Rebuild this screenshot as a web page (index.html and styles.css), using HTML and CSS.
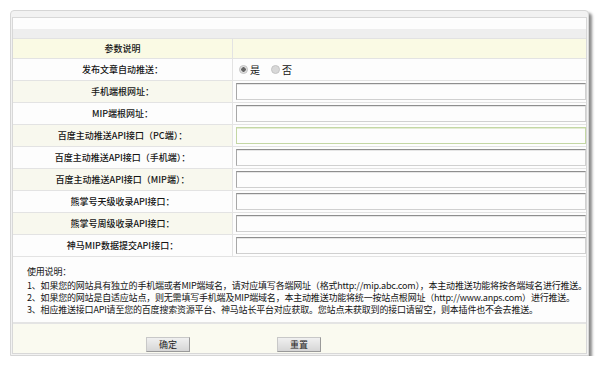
FILE: index.html
```html
<!DOCTYPE html>
<html lang="zh-CN">
<head>
    <meta charset="UTF-8">
    <title>百度主动推送设置</title>
    <link rel="stylesheet" href="styles.css">
</head>
<body>
    <div class="panel">
        <div class="inner">
            <div class="top-strip"></div>
            <div class="band"></div>
            <form id="pushForm">
                <table class="form-table">
                    <tr class="head">
                        <td class="label">参数说明</td>
                        <td class="field"></td>
                    </tr>
                    <tr>
                        <td class="label">发布文章自动推送：</td>
                        <td class="field radios">
                            <label><span class="radio checked"></span>是</label>
                            <label><span class="radio"></span>否</label>
                        </td>
                    </tr>
                    <tr class="alt">
                        <td class="label">手机端根网址：</td>
                        <td class="field"><input type="text"></td>
                    </tr>
                    <tr>
                        <td class="label">MIP端根网址：</td>
                        <td class="field"><input type="text"></td>
                    </tr>
                    <tr class="alt">
                        <td class="label">百度主动推送API接口（PC端）：</td>
                        <td class="field"><input type="text" class="focus"></td>
                    </tr>
                    <tr>
                        <td class="label">百度主动推送API接口（手机端）：</td>
                        <td class="field"><input type="text"></td>
                    </tr>
                    <tr class="alt">
                        <td class="label">百度主动推送API接口（MIP端）：</td>
                        <td class="field"><input type="text"></td>
                    </tr>
                    <tr>
                        <td class="label">熊掌号天级收录API接口：</td>
                        <td class="field"><input type="text"></td>
                    </tr>
                    <tr class="alt">
                        <td class="label">熊掌号周级收录API接口：</td>
                        <td class="field"><input type="text"></td>
                    </tr>
                    <tr>
                        <td class="label">神马MIP数据提交API接口：</td>
                        <td class="field"><input type="text"></td>
                    </tr>
                </table>

                <div class="notes">
                    <p>使用说明：</p>
                    <p>1、如果您的网站具有独立的手机端或者MIP端域名，请对应填写各端网址（格式http://mip.abc.com），本主动推送功能将按各端域名进行推送。</p>
                    <p>2、如果您的网站是自适应站点，则无需填写手机端及MIP端域名，本主动推送功能将统一按站点根网址（http://www.anps.com）进行推送。</p>
                    <p>3、相应推送接口API请至您的百度搜索资源平台、神马站长平台对应获取。您站点未获取到的接口请留空，则本插件也不会去推送。</p>
                </div>

                <div class="actions">
                    <button type="submit" class="btn">确定</button>
                    <button type="reset" class="btn">重置</button>
                </div>
            </form>
        </div>
    </div>
</body>
</html>
```

FILE: styles.css
```css
body {
    margin: 10px 0 0 10px;
    font-family: "Noto Sans CJK SC", "DejaVu Sans", sans-serif;
    font-size: 9px;
    color: #141414;
    background-color: #fff;
}
.panel {
    box-sizing: border-box;
    width: 579px;
    padding: 6px 1px 1px 1px;
    background-color: #f2f2f2;
    border: 1px solid #d6d6d6;
    border-radius: 4px 4px 0 0;
    box-shadow: 3px 3px 3px #8a8a8a;
}
.inner {
    border: 1px solid #d8d8d8;
    background-color: #fdfdfd;
}
.top-strip {
    height: 11px;
    background-color: #fdfdfd;
}
.band {
    height: 10px;
    background-color: #eeeeee;
    border-bottom: 1px solid #e2e2e2;
    box-sizing: border-box;
}
.form-table {
    width: 100%;
    border-collapse: collapse;
    table-layout: fixed;
}
.form-table td {
    height: 21px;
    padding: 0;
    border-bottom: 1px solid #e3e3e3;
}
.form-table .label {
    width: 219px;
    text-align: center;
    font-weight: 500;
    border-right: 1px solid #e3e3e3;
}
.form-table .field {
    padding-left: 3px;
    background-color: #fdfdfd;
}
.form-table tr.head td {
    height: 19px;
    background-color: #fafae4;
}
.form-table tr.alt .label {
    background-color: #f8f8ee;
}
.form-table input {
    display: block;
    box-sizing: border-box;
    width: 100%;
    height: 17px;
    margin: 0;
    padding: 0 2px;
    font-size: 9px;
    background-color: #fdfdfd;
    border: 1px solid #d0d0d0;
    border-top-color: #8e8e8e;
    border-left-color: #a8a8a8;
    box-shadow: inset 0 1px 0 #e6e6e6;
}
.form-table input.focus {
    border-color: #c4d7a4;
    box-shadow: inset 0 1px 0 #e4ecd6;
}
.radios label {
    display: inline-flex;
    align-items: center;
    margin-right: 6px;
    margin-left: 3px;
    font-size: 10px;
}
.radio {
    display: inline-block;
    width: 7px;
    height: 7px;
    margin-right: 2px;
    border-radius: 50%;
    background-color: #d8d8d8;
    border: 1px solid #c4c4c4;
}
.radio.checked {
    background: radial-gradient(circle, #666 0 2px, #e0e0e0 2.5px);
}
.notes {
    padding: 9px 14px 6px 14px;
    border-bottom: 2px solid #e4e4e4;
    line-height: 12px;
    letter-spacing: -0.2px;
}
.notes p {
    margin: 0;
    white-space: nowrap;
}
.notes p:first-child {
    margin-bottom: 2px;
}
.actions {
    display: flex;
    gap: 87px;
    height: 29px;
    padding: 13px 0 0 133px;
    box-sizing: border-box;
    background-color: #fafaf0;
}
.btn {
    width: 44px;
    height: 15px;
    padding: 0;
    font-family: inherit;
    font-size: 9px;
    color: #222;
    background: linear-gradient(#f0f0f0, #d6d6d6);
    border: 1px solid #c8c8c8;
    border-right-color: #9a9a9a;
    border-bottom-color: #9a9a9a;
    cursor: pointer;
}
```
